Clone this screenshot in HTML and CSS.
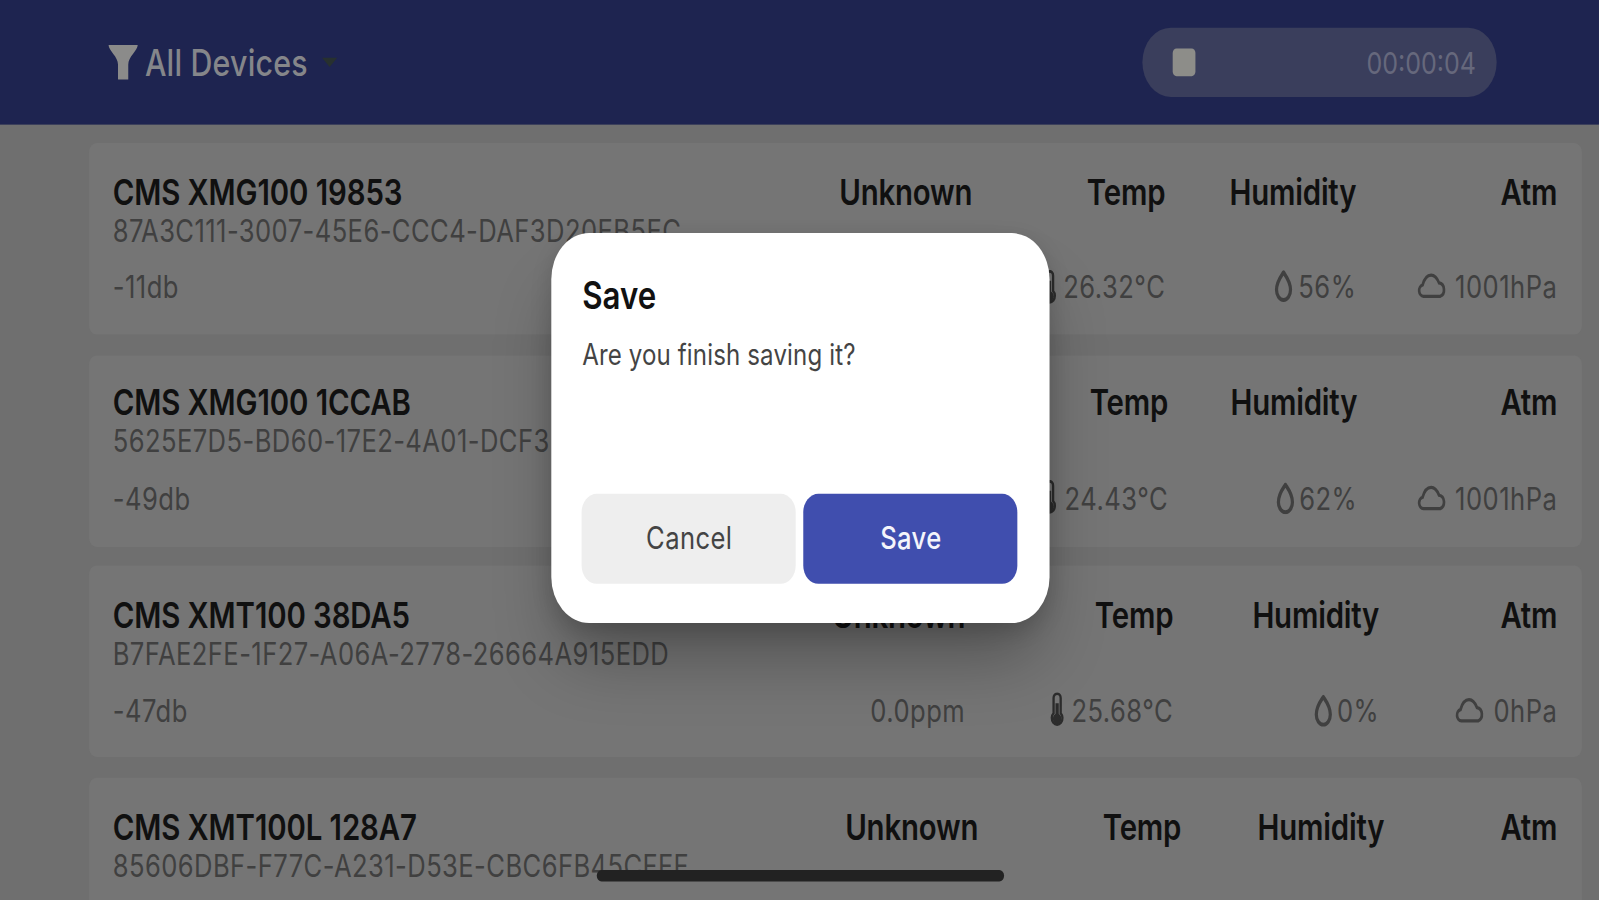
FILE: index.html
```
<!DOCTYPE html>
<html lang="en">
<head>
    <meta charset="UTF-8">
    <meta name="viewport" content="width=device-width, initial-scale=1.0">
    <title>All Devices</title>
    <link rel="stylesheet" href="styles.css">
</head>
<body>
    <!-- icons shared by the cards -->
    <svg class="sprite" width="0" height="0">
        <symbol id="thermo" viewBox="0 0 8 16">
            <path d="M2 9.7V2.6a2 2 0 0 1 4 0v7.1a3 3 0 1 1-4 0z" fill="none" stroke="currentColor" stroke-width="1.3"/>
            <path d="M4 5v7" stroke="currentColor" stroke-width="1.8"/>
            <circle cx="4" cy="12.2" r="2.4" fill="currentColor"/>
        </symbol>
        <symbol id="drop" viewBox="0 0 10 14">
            <path d="M5 1C3.6 2.8 1.3 5 1.3 8.6a3.7 4.4 0 0 0 7.4 0C8.7 5 6.4 2.8 5 1z" fill="none" stroke="currentColor" stroke-width="1.7" stroke-linejoin="round"/>
        </symbol>
        <symbol id="cloud" viewBox="0 0 16 12">
            <path d="M3.4 10.4a2.5 2.5 0 0 1-.5-4.9C3.8 2.8 5.6 1.2 7.4 1.2c2 0 3.2 1.3 4.2 3.4a3 3 0 0 1 .6 5.8z" fill="none" stroke="currentColor" stroke-width="1.4"/>
        </symbol>
    </svg>

    <div class="screen">
        <header class="topbar">
            <div class="filter">
                <svg class="funnel" viewBox="0 0 16 16"><path d="M.3.5h15.4c0 2.4-5 5-5 8.6v6.4H5.3V9.1C5.3 5.5.3 2.9.3.5z" fill="currentColor"/></svg>
                <span class="filter-name">All Devices</span>
                <span class="caret"></span>
            </div>
            <div class="recorder">
                <span class="stop"></span>
                <span class="timer">00:00:04</span>
            </div>
        </header>

        <main class="devices">
            <div class="card card-1">
                <div class="info">
                    <h2>CMS XMG100 19853</h2>
                    <p class="uuid">87A3C111-3007-45E6-CCC4-DAF3D20EB5EC</p>
                    <p class="value">-11db</p>
                </div>
                <div class="metric gas"><h3>Unknown</h3></div>
                <div class="metric temp"><h3>Temp</h3><p class="value"><svg class="thermo"><use href="#thermo"/></svg>26.32°C</p></div>
                <div class="metric humidity"><h3>Humidity</h3><p class="value"><svg class="drop"><use href="#drop"/></svg>56%</p></div>
                <div class="metric atm"><h3>Atm</h3><p class="value"><svg class="cloud"><use href="#cloud"/></svg>1001hPa</p></div>
            </div>

            <div class="card card-2">
                <div class="info">
                    <h2>CMS XMG100 1CCAB</h2>
                    <p class="uuid">5625E7D5-BD60-17E2-4A01-DCF3</p>
                    <p class="value">-49db</p>
                </div>
                <div class="metric temp"><h3>Temp</h3><p class="value"><svg class="thermo"><use href="#thermo"/></svg>24.43°C</p></div>
                <div class="metric humidity"><h3>Humidity</h3><p class="value"><svg class="drop"><use href="#drop"/></svg>62%</p></div>
                <div class="metric atm"><h3>Atm</h3><p class="value"><svg class="cloud"><use href="#cloud"/></svg>1001hPa</p></div>
            </div>

            <div class="card card-3">
                <div class="info">
                    <h2>CMS XMT100 38DA5</h2>
                    <p class="uuid">B7FAE2FE-1F27-A06A-2778-26664A915EDD</p>
                    <p class="value">-47db</p>
                </div>
                <div class="metric gas"><h3>Unknown</h3><p class="value">0.0ppm</p></div>
                <div class="metric temp"><h3>Temp</h3><p class="value"><svg class="thermo"><use href="#thermo"/></svg>25.68°C</p></div>
                <div class="metric humidity"><h3>Humidity</h3><p class="value"><svg class="drop"><use href="#drop"/></svg>0%</p></div>
                <div class="metric atm"><h3>Atm</h3><p class="value"><svg class="cloud"><use href="#cloud"/></svg>0hPa</p></div>
            </div>

            <div class="card card-4">
                <div class="info">
                    <h2>CMS XMT100L 128A7</h2>
                    <p class="uuid">85606DBF-F77C-A231-D53E-CBC6FB45CFFF</p>
                </div>
                <div class="metric gas"><h3>Unknown</h3></div>
                <div class="metric temp"><h3>Temp</h3></div>
                <div class="metric humidity"><h3>Humidity</h3></div>
                <div class="metric atm"><h3>Atm</h3></div>
            </div>
        </main>

        <div class="home-indicator"></div>

        <div class="dialog">
            <h1>Save</h1>
            <p>Are you finish saving it?</p>
            <div class="actions">
                <button class="cancel">Cancel</button>
                <button class="save">Save</button>
            </div>
        </div>
    </div>
</body>
</html>
```
FILE: styles.css
```
* {
    box-sizing: border-box;
}
html, body {
    height: 100vh;
}
body {
    margin: 0;
    overflow: hidden;
    background: #6f6f6f;
    font-family: Inter, "Liberation Sans", sans-serif;
}
h1, h2, h3, p {
    margin: 0;
}
.sprite {
    position: absolute;
}

/* landscape phone, 844 x 390 points stretched over the window */
.screen {
    position: relative;
    width: 844px;
    height: 390px;
    overflow: hidden;
    transform: scale(1.8945, 2.3077);
    transform-origin: 0 0;
}

.topbar {
    display: flex;
    align-items: center;
    justify-content: space-between;
    height: 53.5px;
    padding: 0 54px 0 57px;
    background: #1e2450;
}
.filter {
    display: flex;
    align-items: center;
    color: #85868a;
}
.funnel {
    width: 16px;
    height: 16px;
    color: #8b8b8a;
}
.filter-name {
    margin-left: 3.5px;
    font-size: 16px;
    font-weight: 500;
    line-height: 20px;
    letter-spacing: 0.1px;
}
.caret {
    margin-left: 8px;
    border: 4px solid transparent;
    border-top: 4px solid #27302f;
    border-bottom: 0;
}
.recorder {
    display: flex;
    align-items: center;
    justify-content: space-between;
    width: 187px;
    height: 30.5px;
    padding: 0 11px 0 16px;
    border-radius: 15px;
    background: #3a3e5c;
}
.stop {
    width: 12px;
    height: 12px;
    border-radius: 2px;
    background: #8d8d89;
}
.timer {
    font-size: 13.2px;
    color: #66687c;
}

.devices {
    display: flex;
    flex-direction: column;
    gap: 8.7px;
    padding: 8.5px 9px 0 47px;
}
.card {
    display: flex;
    height: 83px;
    flex-shrink: 0;
    padding: 12.7px 13px 0 12.5px;
    border-radius: 4px;
    background: #757575;
}
.info {
    flex: 1;
    min-width: 0;
    white-space: nowrap;
}
.card h2, .card h3 {
    font-size: 15.5px;
    font-weight: 600;
    line-height: 18px;
    color: #101010;
}
.card h2 {
    letter-spacing: -0.05px;
}
.card h3 {
    letter-spacing: -0.1px;
}
.uuid {
    margin-top: -1px;
    font-size: 13.5px;
    line-height: 16px;
    letter-spacing: 0.22px;
    color: #404040;
}
.value {
    display: flex;
    align-items: center;
    height: 18px;
    margin-top: 7.5px;
    font-size: 13.5px;
    letter-spacing: 0.25px;
    color: #404040;
}
.metric {
    display: flex;
    flex-direction: column;
    align-items: flex-end;
    white-space: nowrap;
}
.metric .value {
    margin-top: 22.5px;
}
.thermo {
    width: 8px;
    height: 15px;
    margin-right: 3.5px;
    color: #2c2c2c;
}
.drop {
    width: 11px;
    height: 14px;
    margin-right: 2px;
}
.cloud {
    width: 16px;
    height: 12px;
    margin-right: 4px;
}

/* every card spreads its own columns */
.card-1 .temp { width: 101.9px; }
.card-1 .humidity { width: 100.8px; }
.card-1 .atm { width: 106.1px; }
.card-2 .temp { width: 101.9px; }
.card-2 .humidity { width: 99.8px; }
.card-2 .atm { width: 105.6px; }
.card-3 .temp { width: 109.8px; }
.card-3 .humidity { width: 108.7px; }
.card-3 .atm { width: 94px; }
.card-4 .temp { width: 107.2px; }
.card-4 .humidity { width: 107.2px; }
.card-4 .atm { width: 91.3px; }

.home-indicator {
    position: absolute;
    left: 314.5px;
    bottom: 8px;
    width: 215.5px;
    height: 4.8px;
    border-radius: 3px;
    background: #222;
}

.dialog {
    position: absolute;
    top: 101px;
    left: 290.8px;
    display: flex;
    flex-direction: column;
    width: 263px;
    height: 168.5px;
    padding: 16.2px 16.5px 17px;
    border-radius: 20px;
    background: #fff;
    box-shadow: 0 20px 32px -6px rgba(0, 0, 0, 0.3), 0 3px 10px rgba(0, 0, 0, 0.14);
}
.dialog h1 {
    font-size: 16.5px;
    font-weight: 600;
    line-height: 22px;
    color: #111;
}
.dialog p {
    margin-top: 5.5px;
    font-size: 12.7px;
    line-height: 18px;
    letter-spacing: 0.08px;
    color: #444;
}
.actions {
    display: flex;
    gap: 4px;
    margin-top: auto;
}
.actions button {
    flex: 1;
    height: 38.3px;
    padding: 0;
    border: none;
    border-radius: 8px;
    font-family: inherit;
    font-size: 13.5px;
    letter-spacing: 0.2px;
}
.actions .cancel {
    background: #eee;
    color: #444;
}
.actions .save {
    background: #404eae;
    color: #f4f4fb;
    font-weight: 500;
}
```
